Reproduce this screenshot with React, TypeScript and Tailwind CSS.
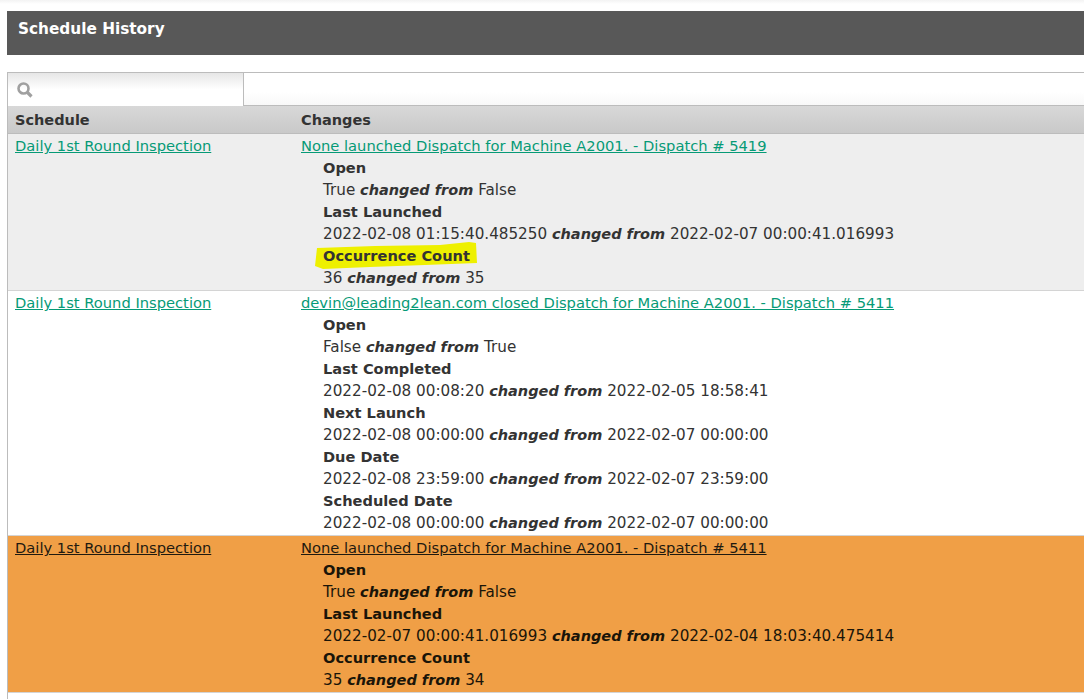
import React from 'react';

const font = { fontFamily: '"DejaVu Sans", Verdana, sans-serif' };

type Change = { label: string; value: string; from: string };

type Row = {
  link: string;
  changes: Change[];
  tone: 'grey' | 'white' | 'orange';
  marked?: boolean;
};

const rows: Row[] = [
  {
    link: 'None launched Dispatch for Machine A2001. - Dispatch # 5419',
    tone: 'grey',
    marked: true,
    changes: [
      { label: 'Open', value: 'True', from: 'False' },
      { label: 'Last Launched', value: '2022-02-08 01:15:40.485250', from: '2022-02-07 00:00:41.016993' },
      { label: 'Occurrence Count', value: '36', from: '35' },
    ],
  },
  {
    link: 'devin@leading2lean.com closed Dispatch for Machine A2001. - Dispatch # 5411',
    tone: 'white',
    changes: [
      { label: 'Open', value: 'False', from: 'True' },
      { label: 'Last Completed', value: '2022-02-08 00:08:20', from: '2022-02-05 18:58:41' },
      { label: 'Next Launch', value: '2022-02-08 00:00:00', from: '2022-02-07 00:00:00' },
      { label: 'Due Date', value: '2022-02-08 23:59:00', from: '2022-02-07 23:59:00' },
      { label: 'Scheduled Date', value: '2022-02-08 00:00:00', from: '2022-02-07 00:00:00' },
    ],
  },
  {
    link: 'None launched Dispatch for Machine A2001. - Dispatch # 5411',
    tone: 'orange',
    changes: [
      { label: 'Open', value: 'True', from: 'False' },
      { label: 'Last Launched', value: '2022-02-07 00:00:41.016993', from: '2022-02-04 18:03:40.475414' },
      { label: 'Occurrence Count', value: '35', from: '34' },
    ],
  },
];

const Marker = () => (
  <svg className="absolute left-[-8px] top-[-3px] w-[162px] h-[27px]" viewBox="0 0 162 27">
    <path d="M2 6 L60 4 L125 3 L154 0 L161 1 L162 21 L110 23 L55 25 L8 27 L0 24 Z" fill="#eef000" />
  </svg>
);

const SearchGlyph = () => (
  <svg width="16" height="16" viewBox="0 0 16 16" fill="none" stroke="#a0a0a0">
    <circle cx="6.5" cy="6.5" r="5" strokeWidth="2.6" />
    <path d="M10 10 L14.5 14.5" strokeWidth="3.2" />
  </svg>
);

const HistoryRow = ({ row }: { row: Row }) => {
  const isOrange = row.tone === 'orange';
  const linkColor = isOrange ? 'text-[#1f1a10]' : 'text-[#069a76]';
  return (
    <div
      className={
        'flex py-px border-b border-[#d4d4d4] ' +
        (row.tone === 'grey' ? 'bg-[#eeeeee]' : isOrange ? 'bg-[#f09f46]' : 'bg-white')
      }
    >
      <div className="w-[293px] shrink-0 pl-[7px]">
        <a className={'underline ' + linkColor}>Daily 1st Round Inspection</a>
      </div>
      <div className="flex-1">
        <a className={'underline whitespace-nowrap ' + linkColor}>{row.link}</a>
        <div className={'pl-[22px] ' + (isOrange ? 'text-[#1a1509]' : 'text-[#333333]')}>
          {row.changes.map((c) => (
            <div key={c.label}>
              <div className="font-bold text-[14.6px]">
                <span className="relative inline-block">
                  {row.marked && c.label === 'Occurrence Count' && <Marker />}
                  <span className="relative">{c.label}</span>
                </span>
              </div>
              <div className="whitespace-nowrap text-[15.2px]">
                {c.value} <b className="italic text-[14.5px]">changed from</b> {c.from}
              </div>
            </div>
          ))}
        </div>
      </div>
    </div>
  );
};

export default function App() {
  return (
    <div
      className="h-[699px] w-[1084px] overflow-hidden bg-white text-[14.7px] leading-[22px] bg-gradient-to-b from-[#f3f3f3] from-0% to-white to-[4px]"
      style={font}
    >
      <div className="pt-[11px] pl-[7px]">
        <div className="h-[44px] bg-[#585858] pl-[11px] pt-[7px] font-bold text-white text-[15.3px]">Schedule History</div>

        <div className="mt-[17px] h-[640px] border-t border-l border-[#bcbcbc]">
          <div className="h-[33px] flex border-b border-[#bcbcbc] bg-gradient-to-b from-white from-60% to-[#f8f8f8]">
            <div className="w-[236px] h-[33px] border-r border-[#bcbcbc] bg-gradient-to-b from-[#e6e6e6] to-white to-50% pl-[9px] pt-[9px]">
              <SearchGlyph />
            </div>
          </div>
          <div className="h-[28px] flex items-center border-b border-[#bcbcbc] bg-gradient-to-b from-[#d8d8d8] to-[#c9c9c9] font-bold text-[#333333] text-[14.5px]">
            <div className="w-[293px] shrink-0 pl-[7px]">Schedule</div>
            <div>Changes</div>
          </div>
          {rows.map((row) => (
            <HistoryRow key={row.link} row={row} />
          ))}
        </div>
      </div>
    </div>
  );
}
